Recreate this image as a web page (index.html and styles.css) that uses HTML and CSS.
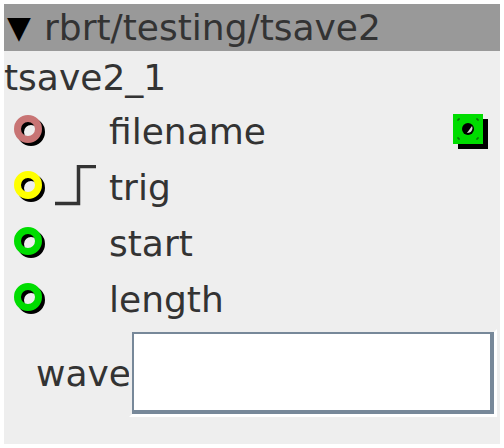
FILE: index.html
```html
<!DOCTYPE html>
<html>
<head>
<meta charset="utf-8">
<link rel="stylesheet" href="styles.css">
</head>
<body>
<div class="panel">
  <div class="header"><span class="tri">▼</span><span class="path">rbrt/testing/tsave2</span></div>
  <div class="name">tsave2_1</div>
  <div class="row">
    <span class="port"><svg width="36" height="36" viewBox="0 0 36 36"><circle cx="17" cy="17" r="10.5" fill="none" stroke="#000" stroke-width="7"/><circle cx="14" cy="14" r="10.5" fill="none" stroke="#c87474" stroke-width="7"/></svg></span>
    <span class="step"></span>
    <span class="label">filename</span>
    <span class="file"><svg width="36" height="36" viewBox="0 0 36 36"><rect x="5" y="5" width="30" height="30" fill="#000"/><rect x="0" y="0" width="30" height="30" fill="#00dd00"/><path d="M5 7V5h2M23 5h2v2M25 23v2h-2M7 25H5v-2" stroke="#115511" stroke-width="1" fill="none"/><circle cx="15" cy="15" r="6" fill="#000"/><path d="M19 12 A5 5 0 0 1 14 19 Z" fill="#fff" opacity="0.85"/></svg></span>
  </div>
  <div class="row">
    <span class="port"><svg width="36" height="36" viewBox="0 0 36 36"><circle cx="17" cy="17" r="10.5" fill="none" stroke="#000" stroke-width="7"/><circle cx="14" cy="14" r="10.5" fill="none" stroke="#ffff00" stroke-width="7"/></svg></span>
    <span class="step"><svg width="44" height="44" viewBox="0 0 44 44"><path d="M0 38.5H23.5V1.5H41" fill="none" stroke="#333" stroke-width="3.5"/></svg></span>
    <span class="label">trig</span>
  </div>
  <div class="row">
    <span class="port"><svg width="36" height="36" viewBox="0 0 36 36"><circle cx="17" cy="17" r="10.5" fill="none" stroke="#000" stroke-width="7"/><circle cx="14" cy="14" r="10.5" fill="none" stroke="#00dd00" stroke-width="7"/></svg></span>
    <span class="step"></span>
    <span class="label">start</span>
  </div>
  <div class="row">
    <span class="port"><svg width="36" height="36" viewBox="0 0 36 36"><circle cx="17" cy="17" r="10.5" fill="none" stroke="#000" stroke-width="7"/><circle cx="14" cy="14" r="10.5" fill="none" stroke="#00dd00" stroke-width="7"/></svg></span>
    <span class="step"></span>
    <span class="label">length</span>
  </div>
  <div class="wave-row">
    <span class="wave-label">wave</span>
    <span class="bevel"><span class="field"></span></span>
  </div>
</div>
</body>
</html>
```
FILE: styles.css
```css
html, body {
  margin: 0;
  padding: 0;
  background: #ffffff;
}
body {
  font-family: "DejaVu Sans", sans-serif;
  color: #333333;
}
.panel {
  margin: 4px;
  width: 496px;
  height: 440px;
  background: #eeeeee;
  display: flex;
  flex-direction: column;
}
.header {
  height: 47px;
  background: #999999;
  display: flex;
  align-items: center;
  font-size: 36px;
  line-height: 47px;
  white-space: nowrap;
}
.tri {
  color: #000;
  font-size: 31px;
  margin-left: 3px;
  width: 37px;
}
.path {
  color: #333;
}
.name {
  height: 53px;
  font-size: 36px;
  line-height: 53px;
}
.row {
  height: 56px;
  display: flex;
  align-items: center;
}
.port {
  width: 46px;
  padding-left: 10px;
  height: 36px;
  box-sizing: border-box;
  display: flex;
  align-items: center;
}
.port svg {
  display: block;
  margin-top: 2px;
}
.step {
  width: 59px;
  height: 44px;
  display: flex;
  align-items: center;
}
.step svg {
  display: block;
  margin-left: 5px;
  margin-top: -2px;
}
.label {
  font-size: 36px;
  line-height: 42px;
}
.file {
  margin-left: auto;
  margin-right: 11px;
  height: 36px;
}
.file svg {
  display: block;
}
.wave-row {
  display: flex;
  align-items: center;
  margin-top: 1px;
}
.wave-label {
  font-size: 36px;
  margin-left: 32px;
  width: 93px;
}
.bevel {
  display: block;
  border: 3px solid;
  border-color: #eeeeee #ffffff #ffffff #eeeeee;
}
.field {
  display: block;
  width: 356px;
  height: 76px;
  background: #ffffff;
  border-style: solid;
  border-color: #778899;
  border-width: 2px 4px 4px 2px;
}
```
